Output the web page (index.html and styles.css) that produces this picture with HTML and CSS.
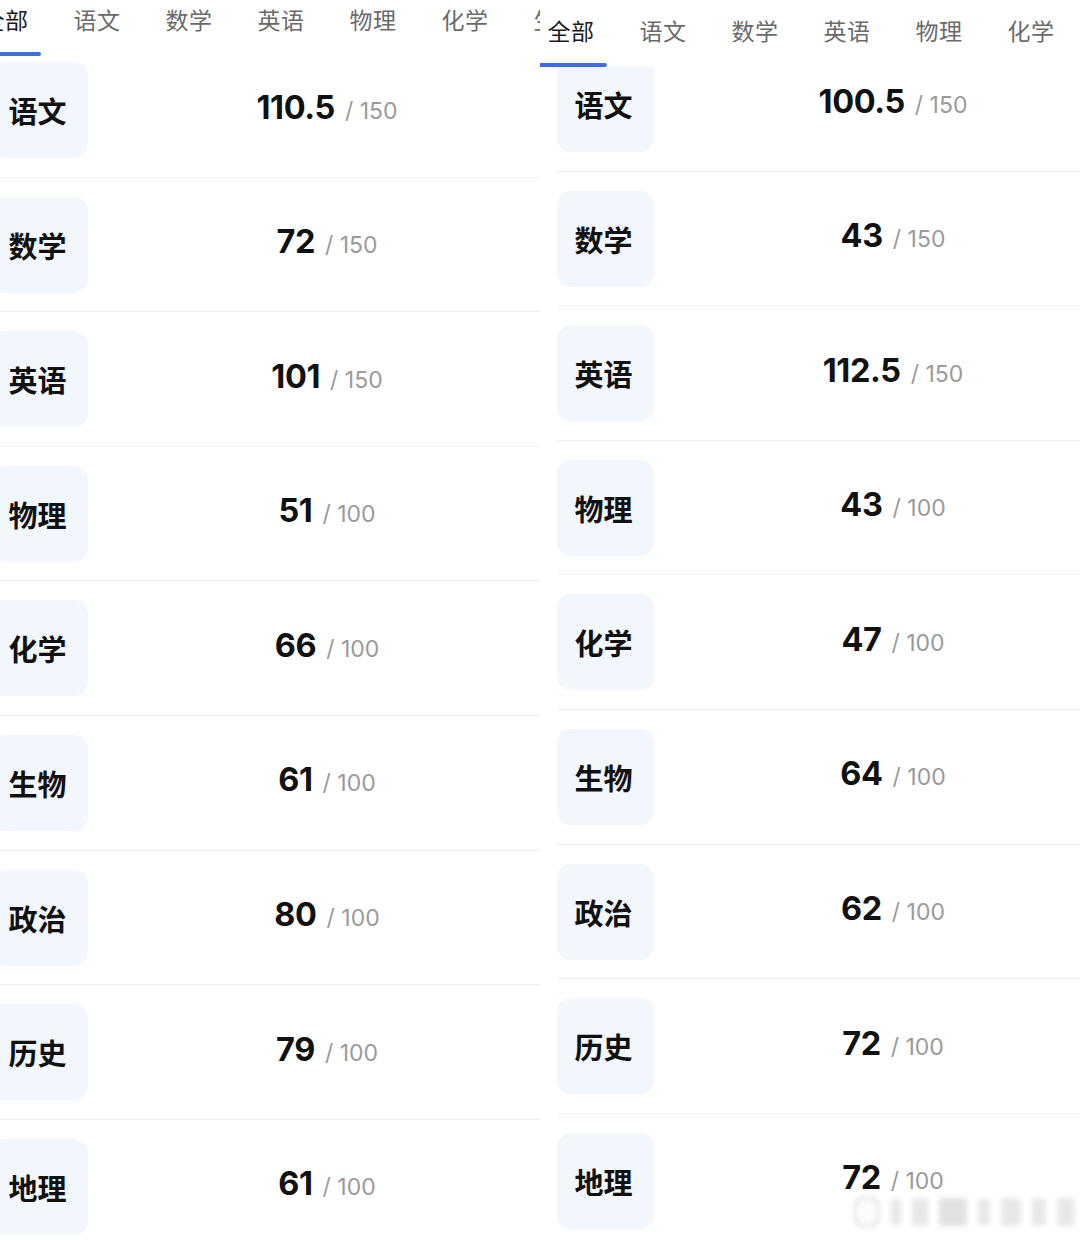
FILE: index.html
```html
<!DOCTYPE html>
<html lang="zh-CN">
<head>
<meta charset="utf-8">
<title>成绩</title>
<link rel="stylesheet" href="styles.css">
</head>
<body>
<div class="page">
  <section class="panel">
    <div class="inner inner-left">
      <nav class="tabs">
        <div class="tab active">全部</div>
        <div class="tab">语文</div>
        <div class="tab">数学</div>
        <div class="tab">英语</div>
        <div class="tab">物理</div>
        <div class="tab">化学</div>
        <div class="tab">生物</div>
      </nav>
      <div class="list">
        <div class="list-inner list-left">
          <div class="row"><div class="subj">语文</div><div class="score"><b>110.5</b><span>/ 150</span></div></div>
          <div class="row"><div class="subj">数学</div><div class="score"><b>72</b><span>/ 150</span></div></div>
          <div class="row"><div class="subj">英语</div><div class="score"><b>101</b><span>/ 150</span></div></div>
          <div class="row"><div class="subj">物理</div><div class="score"><b>51</b><span>/ 100</span></div></div>
          <div class="row"><div class="subj">化学</div><div class="score"><b>66</b><span>/ 100</span></div></div>
          <div class="row"><div class="subj">生物</div><div class="score"><b>61</b><span>/ 100</span></div></div>
          <div class="row"><div class="subj">政治</div><div class="score"><b>80</b><span>/ 100</span></div></div>
          <div class="row"><div class="subj">历史</div><div class="score"><b>79</b><span>/ 100</span></div></div>
          <div class="row"><div class="subj">地理</div><div class="score"><b>61</b><span>/ 100</span></div></div>
        </div>
      </div>
    </div>
  </section>
  <section class="panel">
    <div class="inner inner-right">
      <nav class="tabs">
        <div class="tab active">全部</div>
        <div class="tab">语文</div>
        <div class="tab">数学</div>
        <div class="tab">英语</div>
        <div class="tab">物理</div>
        <div class="tab">化学</div>
        <div class="tab">生物</div>
      </nav>
      <div class="list">
        <div class="list-inner list-right">
          <div class="row"><div class="subj">语文</div><div class="score"><b>100.5</b><span>/ 150</span></div></div>
          <div class="row"><div class="subj">数学</div><div class="score"><b>43</b><span>/ 150</span></div></div>
          <div class="row"><div class="subj">英语</div><div class="score"><b>112.5</b><span>/ 150</span></div></div>
          <div class="row"><div class="subj">物理</div><div class="score"><b>43</b><span>/ 100</span></div></div>
          <div class="row"><div class="subj">化学</div><div class="score"><b>47</b><span>/ 100</span></div></div>
          <div class="row"><div class="subj">生物</div><div class="score"><b>64</b><span>/ 100</span></div></div>
          <div class="row"><div class="subj">政治</div><div class="score"><b>62</b><span>/ 100</span></div></div>
          <div class="row"><div class="subj">历史</div><div class="score"><b>72</b><span>/ 100</span></div></div>
          <div class="row"><div class="subj">地理</div><div class="score"><b>72</b><span>/ 100</span></div></div>
        </div>
      </div>
    </div>
    <div class="watermark">
      <i class="wm-logo"></i><i class="wm-bar w1"></i><i class="wm-bar w2"></i><i class="wm-bar w3"></i><i class="wm-bar w4"></i><i class="wm-bar w5"></i><i class="wm-bar w6"></i><i class="wm-bar w7"></i>
    </div>
  </section>
</div>
</body>
</html>
```

FILE: styles.css
```css
* { box-sizing: border-box; }
html, body { margin: 0; padding: 0; background: #fff; }
body {
  width: 1080px;
  height: 1240px;
  overflow: hidden;
  font-family: "Noto Sans CJK SC", "Noto Sans", sans-serif;
  color: #111;
}
.page {
  display: flex;
  width: 1080px;
  height: 1240px;
}
.panel {
  position: relative;
  width: 540px;
  height: 1240px;
  overflow: hidden;
  background: #fff;
}
.inner {
  width: 640px;
  display: flex;
  flex-direction: column;
  height: 1280px;
}
.inner-left { margin-left: -26px; margin-top: -11px; }
.inner-right { margin-left: 0; margin-top: 0; }

.tabs {
  display: flex;
  height: 67px;
  margin-left: -15px;
  flex: none;
}
.tab {
  width: 92px;
  flex: none;
  height: 67px;
  display: flex;
  flex-direction: column;
  align-items: center;
  padding-top: 15px;
  font-size: 23px;
  line-height: 30px;
  color: #6a6a6a;
  letter-spacing: 0.5px;
}
.tab.active { color: #1a1a1a; }
.tab.active::after {
  content: "";
  display: block;
  margin-top: auto;
  width: 71px;
  height: 4px;
  border-radius: 2px;
  background: #3b6fdc;
}

.list {
  flex: 1;
  overflow: hidden;
}
.list-right { margin-top: -30px; }
.list-left { margin-top: -13px; }

.row {
  display: flex;
  align-items: center;
  margin-left: 17px;
  padding: 19px 0 18.6px;
  border-bottom: 1px solid #efefef;
}
.subj {
  width: 97px;
  height: 96px;
  flex: none;
  border-radius: 14px;
  background: #f2f6fd;
  display: flex;
  align-items: center;
  justify-content: center;
  font-size: 29px;
  font-weight: 700;
  color: #111;
  padding-right: 4px;
}
.score {
  width: 478px;
  flex: none;
  text-align: center;
  margin-top: -6px;
  font-family: Inter, "Liberation Sans", sans-serif;
  white-space: nowrap;
}
.score b {
  font-size: 32.5px;
  font-weight: 700;
  color: #111;
  letter-spacing: -0.4px;
}
.score span {
  font-size: 23px;
  font-weight: 400;
  color: #9a9a9a;
  margin-left: 10px;
}

.watermark {
  position: absolute;
  left: 314px;
  top: 1196px;
  display: flex;
  align-items: center;
  gap: 11px;
  filter: blur(2.5px);
  opacity: 0.55;
}
.wm-logo {
  display: block;
  width: 26px;
  height: 32px;
  border-radius: 12px;
  border: 3px solid #d0d0d0;
  background: #fafafa;
}
.wm-bar {
  display: block;
  height: 28px;
  background: #d6d6d6;
  border-radius: 2px;
}
.w1 { width: 10px; }
.w2 { width: 16px; }
.w3 { width: 28px; background: #cacaca; }
.w4 { width: 12px; }
.w5 { width: 20px; }
.w6 { width: 14px; }
.w7 { width: 18px; }
```
